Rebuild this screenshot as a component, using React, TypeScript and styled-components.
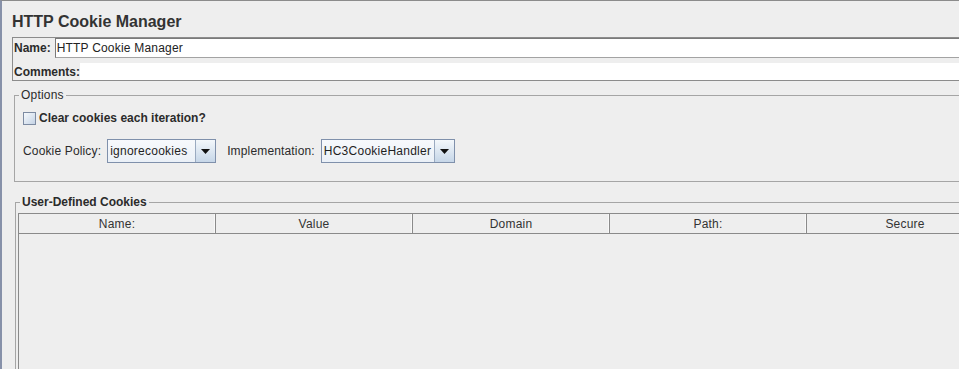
import React from 'react';
import styled, { createGlobalStyle } from 'styled-components';

const GlobalStyle = createGlobalStyle`
    html, body {
        margin: 0;
        padding: 0;
        background: #eeeeee;
    }

    body {
        font-family: 'Liberation Sans', Arial, sans-serif;
        font-size: 12px;
        color: #333333;
    }
`

// the whole editor panel, with the tree splitter on the left edge
const Frame = styled.div`
    width: 959px;
    height: 369px;
    box-sizing: border-box;
    overflow: hidden;
    background: #eeeeee;
    border-top: 1px solid #8b8b8b;
    border-left: 2px solid #8791a9;
    padding-left: 10px;
    display: flex;
    flex-direction: column;
`

const Title = styled.h1`
    margin: 12px 0 6px 0;
    font-size: 16px;
    line-height: 18px;
    font-weight: bold;
    color: #333333;
`

const NameBox = styled.div`
    width: 1000px;
    flex-shrink: 0;
    border: 1px solid #8c8c8c;
    display: flex;
    flex-direction: column;
    gap: 5px;
`

const Row = styled.div<{ $height: number }>`
    display: flex;
    align-items: center;
    height: ${p => p.$height}px;
`

const FieldLabel = styled.span<{ $gap?: number }>`
    font-weight: bold;
    padding-left: 1px;
    margin-right: ${p => p.$gap ?? 0}px;
    color: #2b2b2b;
`

const TextField = styled.div`
    flex: 1;
    height: 100%;
    box-sizing: border-box;
    background: #ffffff;
    border-top: 1px solid #7a7a7a;
    border-left: 1px solid #7a7a7a;
    border-bottom: 1px solid #a3a3a3;
    padding-left: 1px;
    display: flex;
    align-items: center;
    color: #222222;
    letter-spacing: 0.2px;
`

const CommentArea = styled.div`
    flex: 1;
    height: 100%;
    background: #ffffff;
`

const Group = styled.fieldset<{ $offset: number; $top: number; $grow?: boolean }>`
    margin: ${p => p.$top}px 0 0 ${p => p.$offset}px;
    padding: 0;
    width: 1000px;
    min-width: 0;
    flex-shrink: 0;
    border: none;
    border-top: 1px solid #a5a5a5;
    border-left: 1px solid #a5a5a5;
    border-bottom: ${p => (p.$grow ? 'none' : '1px solid #a5a5a5')};
    ${p => (p.$grow ? 'flex: 1;' : '')}
    display: flex;
    flex-direction: column;
`

const Legend = styled.legend<{ $bold?: boolean }>`
    margin-left: 4px;
    padding: 0 2px;
    line-height: 14px;
    font-weight: ${p => (p.$bold ? 'bold' : 'normal')};
    letter-spacing: ${p => (p.$bold ? '0' : '0.2px')};
    color: #2b2b2b;
`

const OptionsBody = styled.div`
    padding: 8px 0 18px 8px;
    display: flex;
    flex-direction: column;
    gap: 13px;
`

const CheckRow = styled.label`
    display: flex;
    align-items: center;
    gap: 3px;
    height: 16px;
    font-weight: bold;
    color: #2b2b2b;
`

const CheckBox = styled.span`
    width: 13px;
    height: 13px;
    box-sizing: border-box;
    border: 1px solid #7d8ba2;
    background: linear-gradient(135deg, #f6f9fc 0%, #d9e3ef 60%, #c3d2e4 100%);
`

const ComboRow = styled.div`
    display: flex;
    align-items: center;
    height: 24px;
`

const ComboLabel = styled.span<{ $left?: number }>`
    margin-left: ${p => p.$left ?? 0}px;
    margin-right: 6px;
    letter-spacing: 0.15px;
    color: #2b2b2b;
`

const Combo = styled.div<{ $width: number }>`
    width: ${p => p.$width}px;
    height: 24px;
    box-sizing: border-box;
    border: 1px solid #7f90ab;
    display: flex;
`

const ComboValue = styled.div`
    flex: 1;
    padding-left: 2px;
    display: flex;
    align-items: center;
    background: linear-gradient(#f7f9fc, #eaf0f7);
    letter-spacing: 0.25px;
    color: #1f1f1f;
`

const ComboArrow = styled.div`
    width: 19px;
    border-left: 1px solid #9aaac0;
    background: linear-gradient(#f3f7fb, #c6d6e8);
    display: flex;
    align-items: center;
    justify-content: center;
`

const CookiesBody = styled.div`
    flex: 1;
    padding: 4px 0 0 2px;
    display: flex;
    flex-direction: column;
`

const Table = styled.div`
    flex: 1;
    border-left: 1px solid #8a8a8a;
    display: flex;
    flex-direction: column;
`

const HeaderRow = styled.div`
    display: flex;
    height: 21px;
    box-sizing: border-box;
    border-top: 1px solid #8a8a8a;
    border-bottom: 1px solid #8a8a8a;
`

const HeaderCell = styled.div`
    width: 197px;
    flex-shrink: 0;
    box-sizing: border-box;
    border-right: 1px solid #8a8a8a;
    display: flex;
    align-items: center;
    justify-content: center;
    letter-spacing: 0.2px;
    color: #333333;
    box-shadow: inset -1px 0 0 #f8f8f8;
`

const columns = ['Name:', 'Value', 'Domain', 'Path:', 'Secure'];

const ArrowDown = () => (
    <svg width="9" height="5" viewBox="0 0 9 5">
        <path d="M0 0 H9 L4.5 5 Z" fill="#111111" />
    </svg>
)

const App: React.FC = () => {
    return (
        <>
            <GlobalStyle />
            <Frame>
                <Title>HTTP Cookie Manager</Title>

                <NameBox>
                    <Row $height={20}>
                        <FieldLabel $gap={4}>Name:</FieldLabel>
                        <TextField>HTTP Cookie Manager</TextField>
                    </Row>
                    <Row $height={17}>
                        <FieldLabel>Comments:</FieldLabel>
                        <CommentArea />
                    </Row>
                </NameBox>

                <Group $offset={2} $top={7}>
                    <Legend>Options</Legend>
                    <OptionsBody>
                        <CheckRow>
                            <CheckBox />
                            Clear cookies each iteration?
                        </CheckRow>
                        <ComboRow>
                            <ComboLabel>Cookie Policy:</ComboLabel>
                            <Combo $width={109}>
                                <ComboValue>ignorecookies</ComboValue>
                                <ComboArrow><ArrowDown /></ComboArrow>
                            </Combo>
                            <ComboLabel $left={11}>Implementation:</ComboLabel>
                            <Combo $width={134}>
                                <ComboValue>HC3CookieHandler</ComboValue>
                                <ComboArrow><ArrowDown /></ComboArrow>
                            </Combo>
                        </ComboRow>
                    </OptionsBody>
                </Group>

                <Group $offset={3} $top={13} $grow>
                    <Legend $bold>User-Defined Cookies</Legend>
                    <CookiesBody>
                        <Table>
                            <HeaderRow>
                                {columns.map(c => (
                                    <HeaderCell key={c}>{c}</HeaderCell>
                                ))}
                            </HeaderRow>
                        </Table>
                    </CookiesBody>
                </Group>
            </Frame>
        </>
    )
}

export default App;
